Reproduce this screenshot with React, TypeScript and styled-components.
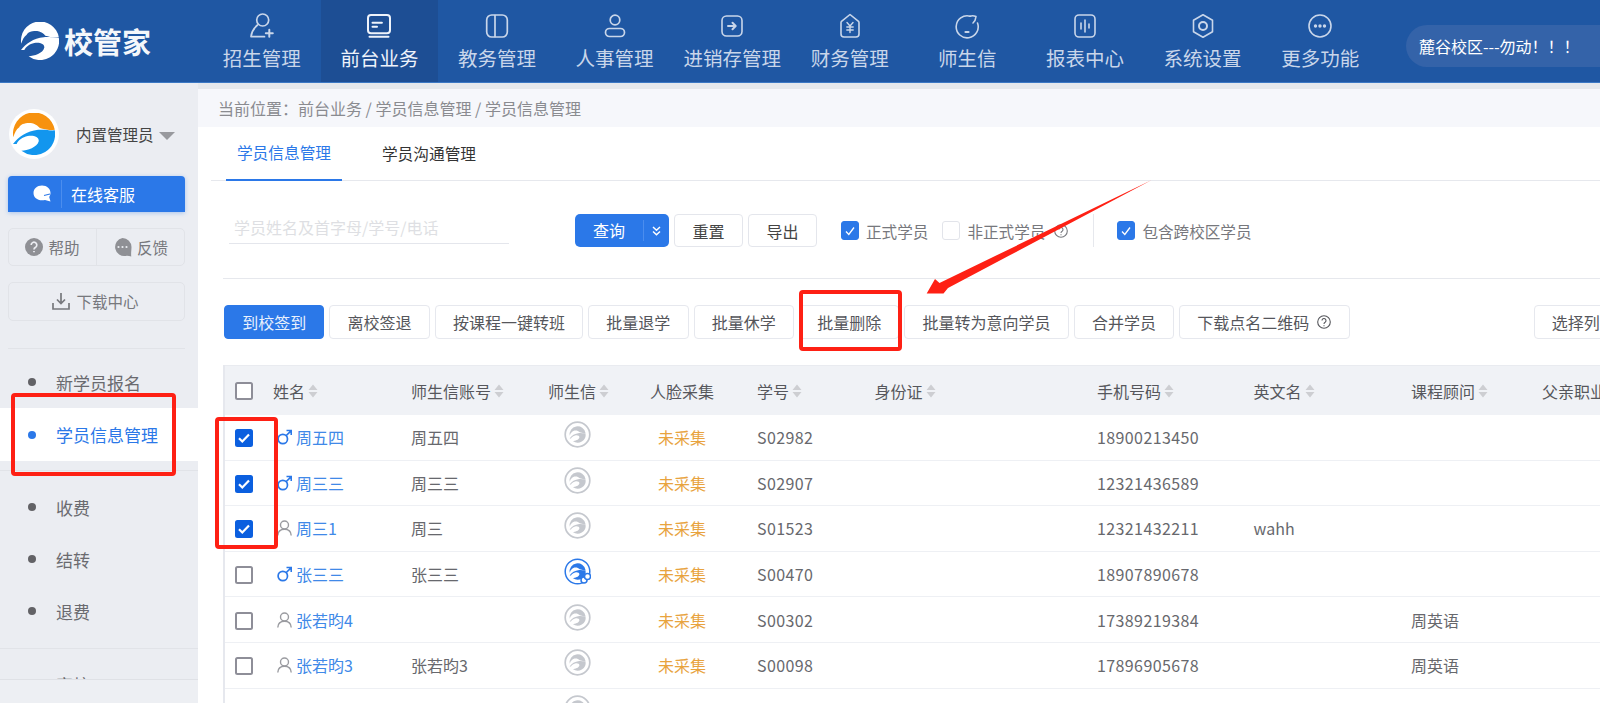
import React from 'react';
import styled, { createGlobalStyle } from 'styled-components';

const Global = createGlobalStyle`
  html, body { margin: 0; padding: 0; background: #fff; }
  * { box-sizing: border-box; }
  body { font-family: "Noto Sans CJK SC", "Noto Sans", sans-serif; font-size: 16px; }
`;

const Page = styled.div`
  position: relative; width: 1600px; height: 703px; overflow: hidden; display: flex; flex-direction: column;
`;
const Header = styled.header`
  height: 83px; flex: none; display: flex; background: #1f57a3; border-bottom: 1px solid #3b78c4;
`;
const Brand = styled.div`
  width: 203px; flex: none; display: flex; align-items: center; padding-left: 21px; gap: 5px; color: #fff;
`;
const BrandName = styled.span`
  font-size: 29px; font-weight: 700; letter-spacing: 0; line-height: 1; color: #f4f7fb;
`;
const Nav = styled.nav`display: flex; flex: none;`;
const NavItem = styled.div<{ $active?: boolean }>`
  width: 117.6px; height: 82px; display: flex; flex-direction: column; align-items: center; padding-top: 13px;
  background: ${p => (p.$active ? '#1d4e94' : 'transparent')};
  color: ${p => (p.$active ? '#eef3fb' : '#c9d6ea')};
  svg { display: block; }
`;
const NavLabel = styled.span`font-size: 19.5px; line-height: 28px; margin-top: 5px; white-space: nowrap;`;
const Campus = styled.div`
  flex: 1; margin: 25px 0 15px 27px; border-radius: 21px 0 0 21px; background: #3463a9; color: #fff;
  display: flex; align-items: center; padding-left: 13px; font-size: 16px; white-space: nowrap; overflow: hidden;
`;
const Body = styled.div`flex: 1; display: flex; min-height: 0;`;
const Sidebar = styled.aside`
  width: 198px; flex: none; background: #ebedf2; display: flex; flex-direction: column; overflow: hidden;
`;
const Profile = styled.div`display: flex; align-items: center; padding: 26px 0 0 9px; color: #444; font-size: 15.5px;`;
const Avatar = styled.div`
  width: 50px; height: 50px; border-radius: 50%; background: #fff; display: flex; align-items: center; justify-content: center;
`;
const ProfileName = styled.span`margin-left: 17px;`;
const Caret = styled.span`
  margin-left: 5px; margin-top: 3px; width: 0; height: 0; border-left: 8px solid transparent; border-right: 8px solid transparent; border-top: 8px solid #98999e;
`;
const ServiceButton = styled.div`
  margin: 17px 13px 0 8px; height: 36px; background: #2b78e8; border-radius: 4px 4px 0 0; color: #fff;
  display: flex; align-items: center; box-shadow: 0 1px 4px rgba(43,120,232,.35); font-size: 16px;
`;
const ServiceIcon = styled.span`
  width: 54px; height: 28px; display: flex; align-items: center; justify-content: center; padding-left: 14px; border-right: 1px solid #4b8dee; margin-right: 9px;
`;
const HelpRow = styled.div`
  margin: 16px 13px 0 8px; height: 38px; border: 1px solid #e1e3e8; border-radius: 5px; display: flex;
`;
const HelpCell = styled.div<{ $split?: boolean }>`
  flex: ${p => (p.$split ? '0 0 88px' : '1')}; display: flex; align-items: center; justify-content: center; gap: 5px; color: #77787d; font-size: 15.5px;
  border-right: ${p => (p.$split ? '1px solid #e1e3e8' : 'none')};
`;
const DownloadRow = styled.div`
  margin: 16px 13px 0 8px; height: 39px; padding: 0 2px 2px 0; border: 1px solid #e1e3e8; border-radius: 5px; display: flex; align-items: center; justify-content: center;
  gap: 6px; color: #77787d; font-size: 15.5px;
`;
const SideRule = styled.div`height: 1px; flex: none; background: #e1e3e8; margin: 27px 13px 0 8px;`;
const MenuGroup = styled.div`padding-top: 7px; flex: none;`;
const MenuGroupBelow = styled.div`
  margin-top: 9px; padding-top: 10px; border-top: 1px solid #e1e3e8; flex: none;
`;
const MenuItem = styled.div<{ $active?: boolean }>`
  height: ${p => (p.$active ? '53px' : '52px')}; display: flex; align-items: center; padding-left: 28px; gap: 20px; font-size: 17px;
  background: ${p => (p.$active ? '#fff' : 'transparent')};
  color: ${p => (p.$active ? '#2b78e8' : '#6a6a6f')};
  &::before { content: ''; width: 8px; height: 8px; border-radius: 50%; background: ${p => (p.$active ? '#2b78e8' : '#626266')}; }
`;
const ClippedMenu = styled.div`
  margin-top: 11px; border-top: 1px solid #e1e3e8; height: 31px; overflow: hidden; padding-top: 9px; flex: none;
`;
const SideFoot = styled.div`flex: 1; background: #edeff3; border-top: 1px solid #dfe1e6;`;
const Main = styled.main`
  flex: 1; min-width: 0; padding-top: 6px; background: #e5e8ec; display: flex; flex-direction: column; overflow: hidden;
`;
const Crumb = styled.div`
  height: 38px; flex: none; background: #f6f7fb; color: #8a8b90; font-size: 16px; display: flex; align-items: center; padding-left: 20px;
`;
const Panel = styled.div`flex: 1; background: #fff; overflow: hidden;`;
const Tabs = styled.div`
  height: 54px; margin-left: 13px; padding-left: 15px; border-bottom: 1px solid #e6e8ed; display: flex; gap: 29px;
`;
const Tab = styled.div<{ $active?: boolean }>`
  height: 54px; padding: 0 0 2px; display: flex; align-items: center; font-size: 15.7px; width: 116px; justify-content: center;
  color: ${p => (p.$active ? '#2b78e8' : '#333')};
  border-bottom: ${p => (p.$active ? '2px solid #2b78e8' : 'none')};
`;
const Filters = styled.div`
  height: 98px; margin-left: 25px; border-bottom: 1px solid #e6e8ed; display: flex; align-items: flex-start; padding-top: 33px;
`;
const SearchBox = styled.div`
  width: 280px; margin-left: 6px; margin-top: -3px; height: 33px; padding-left: 5px; color: #dedfe3; font-size: 16px; display: flex; align-items: center;
  border-bottom: 1px solid #e4e6ec; white-space: nowrap; flex: none;
`;
const QueryButton = styled.div`
  margin-left: 66px; margin-top: 0; width: 94px; height: 33px; border-radius: 5px; background: #2b78e8; color: #fff; display: flex; align-items: center; flex: none;
`;
const QueryLabel = styled.span`width: 69px; height: 21px; line-height: 21px; text-align: center; border-right: 1px solid #4b8dee; padding-left: 0;`;
const QueryMore = styled.span`flex: 1; display: flex; justify-content: center;`;
const PlainButton = styled.div`
  width: 69px; height: 33px; margin-left: 5px; border: 1px solid #e4e6ec; border-radius: 4px; color: #444; display: flex; align-items: center; justify-content: center; flex: none;
`;
const CheckGroup = styled.div<{ $gap: number }>`
  height: 33px; margin-left: ${p => p.$gap}px; display: flex; align-items: center; color: #77787d; font-size: 15.6px; white-space: nowrap; flex: none;
`;
const FilterBox = styled.span<{ $on?: boolean }>`
  width: 18px; height: 19px; border-radius: 3px; margin-right: 7px; display: flex; align-items: center; justify-content: center; flex: none;
  background: ${p => (p.$on ? '#2b78e8' : '#fff')}; border: 1px solid ${p => (p.$on ? '#2b78e8' : '#e2e4ea')};
`;
const VSep = styled.span`width: 1px; height: 33px; margin-left: 25px; background: #e6e8ed; flex: none;`;
const Actions = styled.div`
  margin: 26px 0 0 26px; display: flex; gap: 5px; height: 34px;
`;
const ActionButton = styled.div<{ $primary?: boolean }>`
  height: 34px; padding: 0 17.2px; border-radius: 4px; font-size: 16px; display: flex; align-items: center; gap: 8px; white-space: nowrap; flex: none;
  background: ${p => (p.$primary ? '#2b78e8' : '#fff')};
  color: ${p => (p.$primary ? '#e9f1fd' : '#55565b')};
  border: 1px solid ${p => (p.$primary ? '#2b78e8' : '#e6e8ee')};
`;
const ColumnButton = styled(ActionButton)`margin-left: 179px;`;
const Table = styled.div`
  margin: 26px 0 0 25px; border-left: 2px solid #e6e8ee; font-size: 16px;
`;
const columns = '48px 138px 137px 102px 107px 117.5px 222.5px 156.5px 157.5px 131px 200px';
const HeadRow = styled.div`
  height: 50px; display: grid; grid-template-columns: ${columns}; align-items: center; background: #f0f2f6; color: #56575c; border-top: 1px solid #e9ebf0;
`;
const HeadCell = styled.div`display: flex; align-items: center; gap: 3px; white-space: nowrap;`;
const DataRow = styled.div`
  height: 45.6px; display: grid; grid-template-columns: ${columns}; align-items: center; color: #67686d; border-bottom: 1.5px solid #eef0f4;
`;
const CheckCell = styled.div`padding-left: 10px; display: flex;`;
const RowCheckCell = styled(CheckCell)`margin-top: 2px;`;
const RowBox = styled.span<{ $on?: boolean }>`
  width: 18px; height: 18px; border-radius: 2.5px; display: flex; align-items: center; justify-content: center;
  background: ${p => (p.$on ? '#0b5fdf' : '#fff')}; border: 2.3px solid ${p => (p.$on ? '#0b5fdf' : '#8e8e98')};
`;
const NameCell = styled.div`display: flex; align-items: center; gap: 4px; padding-left: 4px; color: #4089e8; white-space: nowrap;`;
const LinkCell = styled.div`padding-left: 16px; height: 32px; display: flex; align-items: flex-start; padding-top: 0;`;
const FaceCell = styled.div`width: 64px; text-align: center; color: #e8a33e;`;
const Text = styled.div`white-space: nowrap;`;
const NumberText = styled(Text)`letter-spacing: 0.4px;`;

const markA = 'M.3 23C1.5 19 3 15.500 6 13.500 7 11 11 9.500 16 9.600 18 9.500 22 10.500 25.600 14.400 30 15.500 34 17 39.800 16A20 20 0 0 0 .3 23Z';
const markB = 'M0 29.500C5 23 13 17 24 16 30 15.500 36 17 39.800 16.500A20 20 0 0 1 8 36C14 35.500 23 33 24.500 27 25 23 20 21 14 22 9 23 5 26 3.500 29.500Z';

const ColorMark = () => (
  <svg width="42" height="42" viewBox="0 0 40 40">
    <path d={markA} fill="#f7920f" />
    <path d={markB} fill="#1296ee" />
  </svg>
);
const WhiteMark = () => (
  <svg width="38" height="38" viewBox="0 0 40 40">
    <path d={markA} fill="#fff" />
    <path d={markB} fill="#fff" />
  </svg>
);
const LinkMark = ({ on }: { on?: boolean }) => {
  const c = on ? '#2b78e8' : '#c5c8ce';
  return (
    <svg width="27" height="27" viewBox="0 0 27 27">
      <circle cx="13.500" cy="13.500" r="12.300" fill="none" stroke={c} strokeWidth={on ? 1.5 : 1.7} />
      <g transform="translate(5.600 5.600) scale(.4)">
        <path d={markA} fill={c} />
        <path d={markB} fill={c} />
      </g>
      {on && (
        <g fill="none" stroke={c} strokeWidth="1.500">
          <circle cx="20" cy="22" r="3" fill="#fff" />
          <circle cx="23.500" cy="18.500" r="3" fill="#fff" />
        </g>
      )}
    </svg>
  );
};

const iconProps = { width: 26, height: 26, viewBox: '0 0 26 26', fill: 'none', stroke: 'currentColor', strokeWidth: 1.6, strokeLinecap: 'round' as const, strokeLinejoin: 'round' as const };
const navIcons: React.ReactNode[] = [
  <svg {...iconProps} strokeWidth={1.7}><circle cx="13.700" cy="7" r="6" /><path d="M8.500 12C5 15 2.500 19 2 23.700H15.500" /><path d="M20.300 16.800v7M16.800 20.300h7" strokeWidth={2} /></svg>,
  <svg {...iconProps} strokeWidth={2}><rect x="2" y="2" width="22" height="18.300" rx="3" /><path d="M6.500 9.700h9.400M6.500 13.700h4.500M3.500 23.700h19" /></svg>,
  <svg {...iconProps} strokeWidth={1.7}><rect x="2.700" y="2" width="20.600" height="22" rx="5" /><path d="M11 2.500v21" /></svg>,
  <svg {...iconProps} strokeWidth={1.7}><circle cx="13" cy="7" r="4.800" /><rect x="3.500" y="15.500" width="19" height="8" rx="4" /></svg>,
  <svg {...iconProps}><rect x="3" y="3" width="20" height="20" rx="4.500" /><path d="M9 13h7.500M13.500 9.800l3.200 3.200-3.200 3.200" strokeWidth={2} /></svg>,
  <svg {...iconProps}><path d="M13 1.500l8.500 6.800a2 2 0 0 1 .5 1.400V21a3 3 0 0 1-3 3H7a3 3 0 0 1-3-3V9.700a2 2 0 0 1 .5-1.400z" /><path d="M10 9.500l3 3.500 3-3.500M9.800 14h6.400M9.800 17h6.400M13 13v6.500" strokeWidth={1.4} /></svg>,
  <svg {...iconProps}><path d="M16 3.200A11 11 0 1 0 23.500 10" /><path d="M16 3.200c2-.7 4-.5 6 .3-.2 2.500-1 4.800-3 6.500" /><path d="M11.500 19h3" strokeWidth={2.2} /></svg>,
  <svg {...iconProps}><rect x="3" y="2" width="20" height="22" rx="4" /><path d="M9 10v6M13 7v12M17 11v4" /></svg>,
  <svg {...iconProps}><path d="M13 1.800l9.500 5.500v11.400L13 24.200 3.500 18.700V7.300z" /><circle cx="13" cy="13" r="4" strokeWidth={2} /></svg>,
  <svg {...iconProps}><circle cx="13" cy="13" r="11" /><circle cx="8.500" cy="13" r=".9" fill="currentColor" /><circle cx="13" cy="13" r=".9" fill="currentColor" /><circle cx="17.500" cy="13" r=".9" fill="currentColor" /></svg>,
];
const navLabels = ['招生管理', '前台业务', '教务管理', '人事管理', '进销存管理', '财务管理', '师生信', '报表中心', '系统设置', '更多功能'];

const Sort = () => (
  <svg width="10" height="14" viewBox="0 0 10 14"><path d="M5 0.500L9.500 6H.5zM5 13.500L.5 8h9z" fill="#cdced2" /></svg>
);
const Mars = () => (
  <svg width="15" height="16" viewBox="0 0 15 16" fill="none" stroke="#2b78e8" strokeWidth="1.700">
    <circle cx="5.800" cy="10" r="4.700" /><path d="M9.300 6.500L14 1.800M9.500 1.500h4.800v4.600" />
  </svg>
);
const Person = () => (
  <svg width="15" height="16" viewBox="0 0 15 16" fill="none" stroke="#9a9ba0" strokeWidth="1.400">
    <circle cx="7.500" cy="5" r="4" /><path d="M.8 15.500C1 11.500 3.500 9.300 7.500 9.300s6.500 2.200 6.700 6.200" />
  </svg>
);
const RowCheck = () => (
  <svg width="12" height="12" viewBox="0 0 12 12" fill="none" stroke="#fff" strokeWidth="2.200"><path d="M1 6.300l3.300 3.200L11 2.500" /></svg>
);
const FilterCheck = () => (
  <svg width="12" height="12" viewBox="0 0 12 12" fill="none" stroke="#fff" strokeWidth="1.300"><path d="M2 6.500l2.800 3L10 2.500" /></svg>
);
const QuestionLine = ({ color = '#77787d' }: { color?: string }) => (
  <svg width="14" height="14" viewBox="0 0 14 14" fill="none" stroke={color} strokeWidth="1.100">
    <circle cx="7" cy="7" r="6.300" /><path d="M5 5.500a2 2 0 1 1 3.100 1.700C7.300 7.700 7 8 7 9M7 10.200v1" />
  </svg>
);

const heads: [string, boolean][] = [['姓名', true], ['师生信账号', true], ['师生信', true], ['人脸采集', false], ['学号', true], ['身份证', true], ['手机号码', true], ['英文名', true], ['课程顾问', true], ['父亲职业', false]];
const rows = [
  { name: '周五四', male: true, acc: '周五四', no: 'S02982', phone: '18900213450', en: '', adv: '', on: true },
  { name: '周三三', male: true, acc: '周三三', no: 'S02907', phone: '12321436589', en: '', adv: '', on: true },
  { name: '周三1', male: false, acc: '周三', no: 'S01523', phone: '12321432211', en: 'wahh', adv: '', on: true },
  { name: '张三三', male: true, acc: '张三三', no: 'S00470', phone: '18907890678', en: '', adv: '', bound: true },
  { name: '张若昀4', male: false, acc: '', no: 'S00302', phone: '17389219384', en: '', adv: '周英语' },
  { name: '张若昀3', male: false, acc: '张若昀3', no: 'S00098', phone: '17896905678', en: '', adv: '周英语' },
];

const MenuMark = styled.div`
  position: absolute; left: 11px; top: 393px; width: 165px; height: 83px; border: 4px solid #fe2014; border-radius: 4px; pointer-events: none;
`;
const CheckMark = styled.div`
  position: absolute; left: 215px; top: 417px; width: 63px; height: 132px; border: 4px solid #fe2014; border-radius: 4px; pointer-events: none;
`;
const ButtonMark = styled.div`
  position: absolute; left: 799px; top: 290px; width: 103px; height: 61px; border: 4px solid #fe2014; border-radius: 4px; pointer-events: none;
`;
const ArrowLayer = styled.svg`position: absolute; left: 0; top: 0; pointer-events: none;`;

export default function App() {
  return (
    <Page>
      <Global />
      <Header>
        <Brand><WhiteMark /><BrandName>校管家</BrandName></Brand>
        <Nav>
          {navLabels.map((l, i) => (
            <NavItem key={l} $active={i === 1}>{navIcons[i]}<NavLabel>{l}</NavLabel></NavItem>
          ))}
        </Nav>
        <Campus>麓谷校区---勿动！！！</Campus>
      </Header>
      <Body>
        <Sidebar>
          <Profile>
            <Avatar><ColorMark /></Avatar>
            <ProfileName>内置管理员</ProfileName>
            <Caret />
          </Profile>
          <ServiceButton>
            <ServiceIcon>
              <svg width="20" height="20" viewBox="0 0 20 20"><path d="M10 1.500c5 0 8.500 3.200 8.500 7.500 0 1.500-.5 2.800-1.300 3.900l1.300 4.600-5.500-1.600c-.9.300-1.900.4-3 .4-5 0-8.500-3-8.500-7.300S5 1.500 10 1.500z" fill="#fff" /><path d="M12 11.500l6-1.500" stroke="#2b78e8" strokeWidth="1.200" /></svg>
            </ServiceIcon>
            在线客服
          </ServiceButton>
          <HelpRow>
            <HelpCell $split>
              <svg width="18" height="18" viewBox="0 0 18 18"><circle cx="9" cy="9" r="9" fill="#8f9095" /><path d="M6.200 7a2.800 2.800 0 1 1 4.400 2.300C9.500 10 9 10.500 9 11.500M9 13v1.300" stroke="#ebedf2" strokeWidth="1.700" fill="none" /></svg>
              帮助
            </HelpCell>
            <HelpCell>
              <svg width="19" height="19" viewBox="0 0 19 19"><path d="M9.500 0a9 9 0 0 1 9 9c0 2.500-.7 7-.2 9.500-2-.5-3.500-.8-5.300-.6A9 9 0 1 1 9.500 0z" fill="#8f9095" /><circle cx="5.500" cy="9" r="1.100" fill="#ebedf2" /><circle cx="9.500" cy="9" r="1.100" fill="#ebedf2" /><circle cx="13.500" cy="9" r="1.100" fill="#ebedf2" /></svg>
              反馈
            </HelpCell>
          </HelpRow>
          <DownloadRow>
            <svg width="18" height="18" viewBox="0 0 18 18" fill="none" stroke="#77787d" strokeWidth="1.700"><path d="M9 1v10M5 7.500L9 11.500l4-4M1 11v6h16v-6" /></svg>
            下载中心
          </DownloadRow>
          <SideRule />
          <MenuGroup>
            <MenuItem>新学员报名</MenuItem>
            <MenuItem $active>学员信息管理</MenuItem>
          </MenuGroup>
          <MenuGroupBelow>
            <MenuItem>收费</MenuItem>
            <MenuItem>结转</MenuItem>
            <MenuItem>退费</MenuItem>
          </MenuGroupBelow>
          <ClippedMenu><MenuItem>家校</MenuItem></ClippedMenu>
          <SideFoot />
        </Sidebar>
        <Main>
          <Crumb>当前位置：前台业务 / 学员信息管理 / 学员信息管理</Crumb>
          <Panel>
            <Tabs>
              <Tab $active>学员信息管理</Tab>
              <Tab>学员沟通管理</Tab>
            </Tabs>
            <Filters>
              <SearchBox>学员姓名及首字母/学号/电话</SearchBox>
              <QueryButton>
                <QueryLabel>查询</QueryLabel>
                <QueryMore>
                  <svg width="11" height="12" viewBox="0 0 11 12" fill="none" stroke="#fff" strokeWidth="1.500"><path d="M2 2l3.500 3.200L9 2M2 6.500l3.500 3.200L9 6.500" /></svg>
                </QueryMore>
              </QueryButton>
              <PlainButton>重置</PlainButton>
              <PlainButton>导出</PlainButton>
              <CheckGroup $gap={24}>
                <FilterBox $on><FilterCheck /></FilterBox>正式学员
              </CheckGroup>
              <CheckGroup $gap={14}>
                <FilterBox />非正式学员
              </CheckGroup>
              <CheckGroup $gap={9}><QuestionLine /></CheckGroup>
              <VSep />
              <CheckGroup $gap={23}>
                <FilterBox $on><FilterCheck /></FilterBox>包含跨校区学员
              </CheckGroup>
            </Filters>
            <Actions>
              <ActionButton $primary>到校签到</ActionButton>
              <ActionButton>离校签退</ActionButton>
              <ActionButton>按课程一键转班</ActionButton>
              <ActionButton>批量退学</ActionButton>
              <ActionButton>批量休学</ActionButton>
              <ActionButton>批量删除</ActionButton>
              <ActionButton>批量转为意向学员</ActionButton>
              <ActionButton>合并学员</ActionButton>
              <ActionButton>下载点名二维码<QuestionLine color="#55565b" /></ActionButton>
              <ColumnButton>选择列</ColumnButton>
            </Actions>
            <Table>
              <HeadRow>
                <CheckCell><RowBox /></CheckCell>
                {heads.map(([h, s]) => (
                  <HeadCell key={h}>{h}{s && <Sort />}</HeadCell>
                ))}
              </HeadRow>
              {rows.map(r => (
                <DataRow key={r.no}>
                  <RowCheckCell><RowBox $on={r.on}>{r.on && <RowCheck />}</RowBox></RowCheckCell>
                  <NameCell>{r.male ? <Mars /> : <Person />}{r.name}</NameCell>
                  <Text>{r.acc}</Text>
                  <LinkCell><LinkMark on={r.bound} /></LinkCell>
                  <FaceCell>未采集</FaceCell>
                  <NumberText>{r.no}</NumberText>
                  <Text />
                  <NumberText>{r.phone}</NumberText>
                  <Text>{r.en}</Text>
                  <Text>{r.adv}</Text>
                </DataRow>
              ))}
              <DataRow>
                <span />
                <span />
                <span />
                <LinkCell><LinkMark /></LinkCell>
              </DataRow>
            </Table>
          </Panel>
        </Main>
      </Body>
      <MenuMark />
      <CheckMark />
      <ButtonMark />
      <ArrowLayer width="1600" height="703" viewBox="0 0 1600 703">
        <polygon points="926.700,293.500 935,279 939.500,283 1151.700,180 948,288 943.500,293.500" fill="#fe2014" />
      </ArrowLayer>
    </Page>
  );
}
